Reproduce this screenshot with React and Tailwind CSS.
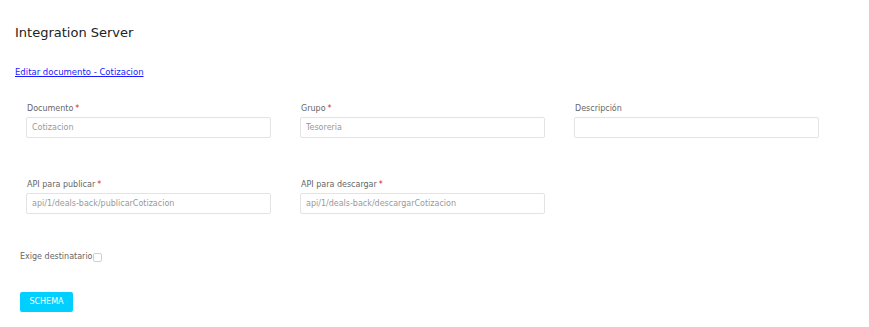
export default function App() {
  const font = { fontFamily: '"DejaVu Sans", sans-serif' }
  const fields = [
    { label: 'Documento', required: true, value: 'Cotizacion' },
    { label: 'Grupo', required: true, value: 'Tesoreria' },
    { label: 'Descripción', required: false, value: '' },
    { label: 'API para publicar', required: true, value: 'api/1/deals-back/publicarCotizacion' },
    { label: 'API para descargar', required: true, value: 'api/1/deals-back/descargarCotizacion' },
  ]

  return (
    <div className="min-h-[327px] w-[869px] bg-white px-[15px] pt-[23px] text-[#333]" style={font}>
      <h1 className="text-[13px] leading-[20px] text-[#222]">Integration Server</h1>

      <a href="#" className="mt-[24px] block text-[8.5px] leading-[10px] text-[#1a1aff] underline">
        Editar documento - Cotizacion
      </a>

      {/* Form grid */}
      <div className="ml-[11px] mt-[27px] grid grid-cols-[245px_245px_245px] gap-x-[29px] gap-y-[42px]">
        {fields.map(({ label, required, value }) => (
          <div key={label} className="flex flex-col gap-[3px]">
            <label className="pl-[1px] text-[8px] leading-[10px] text-[#666]">
              {label}
              {required && <span className="ml-[2px] text-[#e0203a]">*</span>}
            </label>
            <input
              readOnly
              value={value}
              className="h-[21px] w-[245px] rounded-[2px] border border-[#e3e3e3] px-[5px] text-[8px] text-[#999] outline-none"
              style={font}
            />
          </div>
        ))}
      </div>

      <div className="ml-[5px] mt-[38px] flex items-center">
        <span className="text-[8px] leading-[10px] text-[#666]">Exige destinatario</span>
        <span className="h-[9px] w-[9px] rounded-[2px] border border-[#cfcfcf] bg-white" />
      </div>

      <button className="ml-[5px] mt-[30px] h-[20px] w-[53px] rounded-[2px] bg-[#00cfff] text-[8px] text-white">
        SCHEMA
      </button>
    </div>
  )
}
